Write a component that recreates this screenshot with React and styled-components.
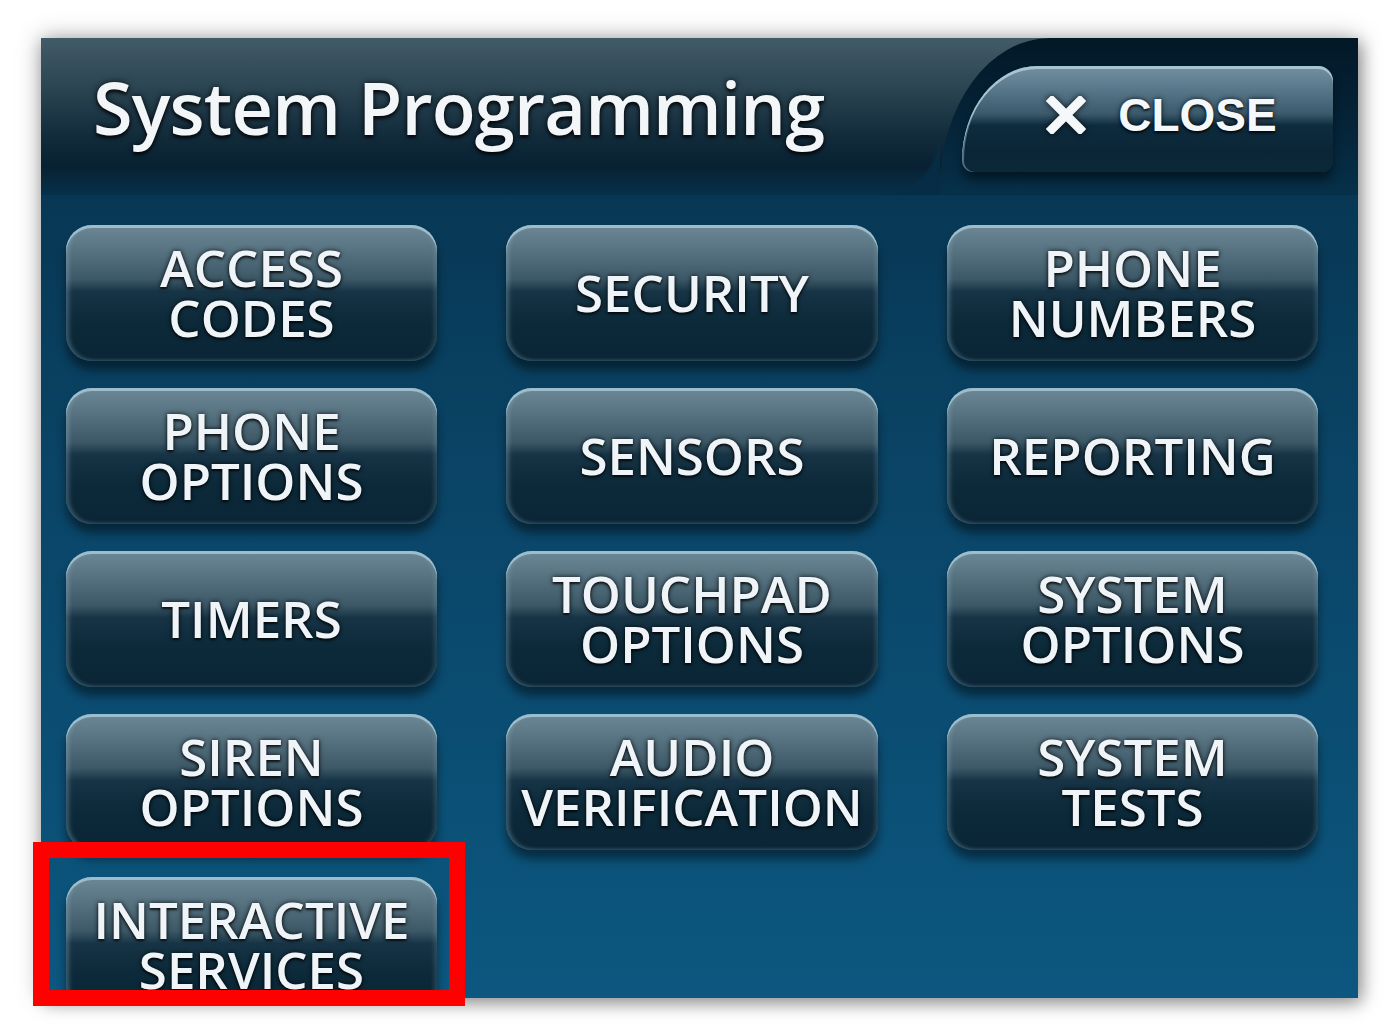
import React from "react";
import styled, { createGlobalStyle } from "styled-components";

const GlobalStyle = createGlobalStyle`
    html, body {
        margin: 0;
        padding: 0;
        background: #ffffff;
    }
    body {
        width: 1400px;
        height: 1036px;
        overflow: hidden;
        font-family: "Open Sans", "DejaVu Sans", sans-serif;
    }
`;

const Stage = styled.div`
    position: relative;
    width: 1317px;
    margin: 38px 0 0 41px;
`;

const Panel = styled.div`
    width: 1317px;
    height: 960px;
    overflow: hidden;
    display: flex;
    flex-direction: column;
    background: linear-gradient(180deg, #06304a 0%, #0a4466 45%, #0c5780 100%);
    box-shadow: 0 0 22px rgba(0, 0, 0, 0.35), 4px 6px 14px rgba(0, 0, 0, 0.25);
`;

const Header = styled.div`
    display: flex;
    height: 157px;
    flex-shrink: 0;
    background: linear-gradient(
        180deg,
        #435b68 0%,
        #2c4654 30%,
        #132c3c 62%,
        #082132 82%,
        #06304a 100%
    );
`;

const Title = styled.h1`
    flex: 1;
    margin: 0;
    padding: 25px 0 0 52px;
    font-family: "Open Sans", sans-serif;
    font-weight: 600;
    font-size: 72px;
    line-height: 88px;
    color: #f2f6f8;
    letter-spacing: -0.8px;
    text-shadow: 0 0 6px rgba(0, 0, 0, 0.8), 0 3px 3px rgba(0, 0, 0, 0.6);
`;

const CloseTab = styled.div`
    position: relative;
    width: 418px;
    padding: 28px 25px 0 22px;
    box-sizing: border-box;
    background: linear-gradient(180deg, #031827 0%, #05253a 60%, #06304a 100%);
    border-top-left-radius: 110px 150px;

    /* soft inner corner where the title bar curves into the tab */
    &::before {
        content: "";
        position: absolute;
        right: 100%;
        bottom: 0;
        width: 60px;
        height: 60px;
        background: radial-gradient(
            circle at 0 0,
            transparent 58px,
            rgba(6, 45, 70, 0.9) 61px
        );
    }
`;

const CloseButton = styled.button`
    display: flex;
    align-items: center;
    justify-content: center;
    gap: 32px;
    width: 371px;
    height: 106px;
    padding: 0 0 8px 28px;
    border: none;
    border-radius: 80px 16px 12px 12px / 100px 16px 12px 12px;
    background: linear-gradient(
        180deg,
        #7391a0 0%,
        #58778a 22%,
        #3b5a6c 45%,
        #0e2c3e 56%,
        #0a2536 80%,
        #0b2839 100%
    );
    box-shadow: inset 0 3px 0 #a6c4d2, inset 2px 0 0 rgba(140, 180, 200, 0.5),
        0 8px 10px rgba(0, 0, 0, 0.45);
    color: #f4f8fa;
    font-family: "Liberation Sans", Arial, sans-serif;
    font-weight: 700;
    font-size: 46px;
    text-shadow: 0 0 5px rgba(0, 0, 0, 0.8), 0 2px 2px rgba(0, 0, 0, 0.6);
    cursor: pointer;
`;

const CloseIcon = styled.svg`
    width: 40px;
    height: 38px;
    filter: drop-shadow(0 0 3px rgba(0, 0, 0, 0.8));
`;

const Grid = styled.div`
    display: grid;
    grid-template-columns: 371px 372px 371px;
    grid-auto-rows: 136px;
    column-gap: 69px;
    row-gap: 27px;
    padding: 30px 0 0 25px;
`;

const MenuButton = styled.button`
    display: flex;
    align-items: center;
    justify-content: center;
    padding: 0 0 2px;
    border: none;
    border-radius: 26px;
    background: linear-gradient(
        180deg,
        #6c8896 0%,
        #587381 18%,
        #3c5867 40%,
        #173446 49%,
        #0c2a3a 70%,
        #0a2536 100%
    );
    box-shadow: inset 0 3px 0 #9dbdcc, inset 3px 0 4px rgba(150, 190, 205, 0.35),
        inset -3px 0 4px rgba(150, 190, 205, 0.2), 0 9px 10px rgba(0, 0, 0, 0.45);
    color: #eef4f7;
    font-family: "Open Sans", sans-serif;
    font-weight: 600;
    font-size: 51px;
    line-height: 50px;
    text-align: center;
    text-transform: uppercase;
    text-shadow: 0 0 5px rgba(0, 0, 0, 0.85), 0 2px 2px rgba(0, 0, 0, 0.6);
    cursor: pointer;
`;

const Highlight = styled.div`
    position: absolute;
    left: -8px;
    top: 804px;
    width: 432px;
    height: 164px;
    box-sizing: border-box;
    border: 16px solid #ff0000;
    pointer-events: none;
`;

const items = [
    ["Access", "Codes"],
    ["Security"],
    ["Phone", "Numbers"],
    ["Phone", "Options"],
    ["Sensors"],
    ["Reporting"],
    ["Timers"],
    ["Touchpad", "Options"],
    ["System", "Options"],
    ["Siren", "Options"],
    ["Audio", "Verification"],
    ["System", "Tests"],
    ["Interactive", "Services"],
];

const App = () => (
    <>
        <GlobalStyle />
        <Stage>
            <Panel>
                <Header>
                    <Title>System Programming</Title>
                    <CloseTab>
                        <CloseButton>
                            <CloseIcon viewBox="0 0 40 38">
                                <path
                                    d="M6 5 L34 33 M34 5 L6 33"
                                    stroke="#f4f8fa"
                                    strokeWidth="9"
                                    strokeLinecap="square"
                                />
                            </CloseIcon>
                            CLOSE
                        </CloseButton>
                    </CloseTab>
                </Header>
                <Grid>
                    {items.map((lines, i) => (
                        <MenuButton key={i}>
                            <span>
                                {lines.map((line, j) => (
                                    <React.Fragment key={j}>
                                        {j > 0 && <br />}
                                        {line}
                                    </React.Fragment>
                                ))}
                            </span>
                        </MenuButton>
                    ))}
                </Grid>
            </Panel>
            <Highlight />
        </Stage>
    </>
);

export default App;
